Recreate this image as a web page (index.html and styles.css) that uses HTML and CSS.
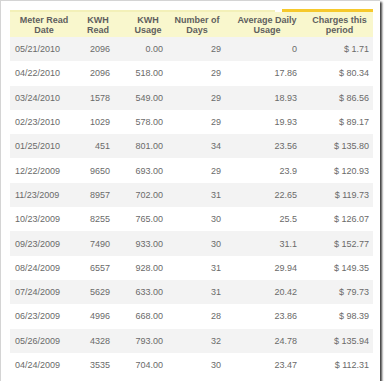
FILE: index.html
```html
<!DOCTYPE html>
<html lang="en">
<head>
<meta charset="UTF-8" />
<title>Billing History</title>
<link rel="stylesheet" href="styles.css">
</head>
<body>
  <div class="frame">
    <div class="tab-strip">
      <div class="strip-light"></div>
      <div class="strip-gold"></div>
    </div>
    <table class="usage">
      <thead>
        <tr>
          <th>Meter Read<br>Date</th>
          <th>KWH<br>Read</th>
          <th>KWH<br>Usage</th>
          <th>Number of<br>Days</th>
          <th>Average Daily<br>Usage</th>
          <th>Charges this<br>period</th>
        </tr>
      </thead>
      <tbody>
        <tr><td>05/21/2010</td><td>2096</td><td>0.00</td><td>29</td><td>0</td><td>$ 1.71</td></tr>
        <tr><td>04/22/2010</td><td>2096</td><td>518.00</td><td>29</td><td>17.86</td><td>$ 80.34</td></tr>
        <tr><td>03/24/2010</td><td>1578</td><td>549.00</td><td>29</td><td>18.93</td><td>$ 86.56</td></tr>
        <tr><td>02/23/2010</td><td>1029</td><td>578.00</td><td>29</td><td>19.93</td><td>$ 89.17</td></tr>
        <tr><td>01/25/2010</td><td>451</td><td>801.00</td><td>34</td><td>23.56</td><td>$ 135.80</td></tr>
        <tr><td>12/22/2009</td><td>9650</td><td>693.00</td><td>29</td><td>23.9</td><td>$ 120.93</td></tr>
        <tr><td>11/23/2009</td><td>8957</td><td>702.00</td><td>31</td><td>22.65</td><td>$ 119.73</td></tr>
        <tr><td>10/23/2009</td><td>8255</td><td>765.00</td><td>30</td><td>25.5</td><td>$ 126.07</td></tr>
        <tr><td>09/23/2009</td><td>7490</td><td>933.00</td><td>30</td><td>31.1</td><td>$ 152.77</td></tr>
        <tr><td>08/24/2009</td><td>6557</td><td>928.00</td><td>31</td><td>29.94</td><td>$ 149.35</td></tr>
        <tr><td>07/24/2009</td><td>5629</td><td>633.00</td><td>31</td><td>20.42</td><td>$ 79.73</td></tr>
        <tr><td>06/23/2009</td><td>4996</td><td>668.00</td><td>28</td><td>23.86</td><td>$ 98.39</td></tr>
        <tr><td>05/26/2009</td><td>4328</td><td>793.00</td><td>32</td><td>24.78</td><td>$ 135.94</td></tr>
        <tr><td>04/24/2009</td><td>3535</td><td>704.00</td><td>30</td><td>23.47</td><td>$ 112.31</td></tr>
      </tbody>
    </table>
  </div>
</body>
</html>
```

FILE: styles.css
```css
body, html {
  margin: 0; padding: 0;
  background: #fff;
  font-family: "Liberation Sans", Arial, sans-serif;
}
.frame {
  width: 380px;
  height: 381px;
  background: #fff;
  border-left: 1px solid #d4d4d4;
  border-top: 1px solid #d4d4d4;
  box-shadow: 2px 2px 2px rgba(0, 0, 0, 0.75);
  padding: 8px 0 0 9px;
  box-sizing: border-box;
}
.tab-strip {
  display: flex;
  align-items: flex-end;
  width: 363px;
  height: 3px;
}
.strip-light {
  flex: 1;
  height: 2px;
  background: #f3f0b8;
  margin-right: 7px;
}
.strip-gold {
  width: 91px;
  height: 3px;
  background: #f6c92c;
}
.usage {
  width: 363px;
  border-collapse: collapse;
  table-layout: fixed;
  font-size: 9px;
}
.usage th {
  box-sizing: border-box;
  background: #f9f7cd;
  color: #5f5f5f;
  font-weight: bold;
  line-height: 10px;
  height: 25px;
  padding: 0;
  text-align: center;
}
.usage td {
  height: 24.3px;
  padding: 0;
  color: #6a6a6a;
  text-align: right;
}
.usage tbody tr:nth-child(odd) td {
  background: #f3f3f3;
}
.usage th:nth-child(1) { width: 68px; }
.usage th:nth-child(2) { width: 40px; }
.usage th:nth-child(3) { width: 56px; padding-left: 4px; }
.usage th:nth-child(4) { width: 54px; padding-right: 8px; }
.usage th:nth-child(5) { width: 78px; }
.usage th:nth-child(6) { width: 67px; }
.usage td:nth-child(1) { text-align: left; padding-left: 5px; }
.usage td:nth-child(2) { padding-right: 8px; }
.usage td:nth-child(3) { padding-right: 11px; }
.usage td:nth-child(4) { padding-right: 7px; }
.usage td:nth-child(5) { padding-right: 9px; }
.usage td:nth-child(6) { padding-right: 4px; }
```
